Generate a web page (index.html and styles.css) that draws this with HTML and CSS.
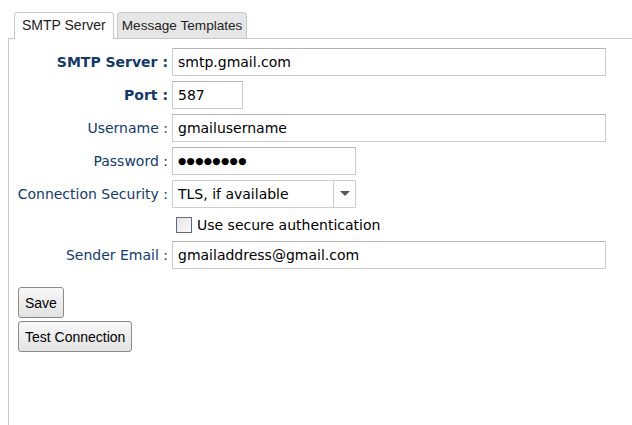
FILE: index.html
```html
<!DOCTYPE html>
<html>
<head>
<meta charset="utf-8">
<link rel="stylesheet" href="styles.css">
</head>
<body>
<div class="tabs">
  <div class="tab active">SMTP Server</div>
  <div class="tab">Message Templates</div>
</div>
<div class="panel">
  <div class="form">
    <label class="lbl bold">SMTP Server :</label>
    <div class="field"><div class="input wide">smtp.gmail.com</div></div>

    <label class="lbl bold">Port :</label>
    <div class="field"><div class="input port">587</div></div>

    <label class="lbl">Username :</label>
    <div class="field"><div class="input wide">gmailusername</div></div>

    <label class="lbl">Password :</label>
    <div class="field"><div class="input mid pw">●●●●●●●●</div></div>

    <label class="lbl">Connection Security :</label>
    <div class="field">
      <div class="select">
        <span class="sel-text">TLS, if available</span>
        <span class="sel-btn"><svg width="10" height="6" viewBox="0 0 10 6"><path d="M0 0h10L5 5z" fill="#555"/></svg></span>
      </div>
    </div>

    <span></span>
    <div class="field check-row"><span class="checkbox"></span><span class="check-label">Use secure authentication</span></div>

    <label class="lbl">Sender Email :</label>
    <div class="field"><div class="input wide">gmailaddress@gmail.com</div></div>
  </div>
  <div class="buttons">
    <button class="btn">Save</button>
    <button class="btn">Test Connection</button>
  </div>
</div>
</body>
</html>
```
FILE: styles.css
```css
html, body {
  margin: 0;
  padding: 0;
  background: #fff;
  height: 100%;
  overflow: hidden;
}
body {
  font-family: "DejaVu Sans", Verdana, sans-serif;
  font-size: 14px;
  color: #000;
}
.tabs {
  display: flex;
  gap: 3px;
  padding: 12px 0 0 14px;
  position: relative;
  z-index: 1;
}
.tab {
  font-family: "Liberation Sans", Arial, sans-serif;
  font-size: 13.6px;
  color: #222;
  height: 25px;
  line-height: 25px;
  padding: 0 4px;
  border: 1px solid #c8c8c8;
  border-bottom: none;
  border-radius: 4px 4px 0 0;
  background: #e6e6e6;
}
.tab.active {
  font-size: 14px;
  background: #fff;
  height: 26px;
  margin-bottom: -1px;
  padding: 0 7px;
}
.panel {
  margin-left: 8px;
  border-left: 1px solid #c6c6c6;
  border-top: 1px solid #c6c6c6;
  height: 400px;
}
.form {
  display: grid;
  grid-template-columns: 159px 1fr;
  column-gap: 4px;
  row-gap: 5px;
  padding-top: 9px;
  align-items: center;
}
.lbl {
  text-align: right;
  color: #13396b;
  white-space: nowrap;
}
.lbl.bold { font-weight: bold; }
.field { display: flex; align-items: center; }
.input {
  box-sizing: border-box;
  height: 28px;
  line-height: 26px;
  border: 1px solid #cdcdcd;
  border-top-color: #b4b4b4;
  padding: 0 5px;
  white-space: nowrap;
}
.wide { width: 434px; }
.port { width: 71px; }
.mid { width: 184px; }
.pw { font-size: 9.5px; letter-spacing: 0.3px; }
.select {
  box-sizing: border-box;
  width: 184px;
  height: 28px;
  border: 1px solid #cdcdcd;
  display: flex;
}
.sel-text { flex: 1; line-height: 26px; padding-left: 5px; }
.sel-btn {
  width: 21px;
  border-left: 1px solid #cdcdcd;
  display: flex;
  align-items: center;
  justify-content: center;
}
.check-row { height: 23px; padding-left: 4px; gap: 5px; }
.checkbox {
  box-sizing: border-box;
  width: 16px;
  height: 16px;
  border: 1px solid #5d6b7c;
  background: linear-gradient(135deg, #e4e4e4, #fafafa);
}
.buttons {
  display: flex;
  flex-direction: column;
  align-items: flex-start;
  gap: 3px;
  padding: 18px 0 0 9px;
}
.btn {
  font-family: "Liberation Sans", Arial, sans-serif;
  font-size: 14px;
  color: #000;
  height: 31px;
  padding: 0 6px;
  border: 1px solid #8a8a8a;
  border-radius: 3px;
  background: linear-gradient(#f8f8f8, #e2e2e2);
}
```
